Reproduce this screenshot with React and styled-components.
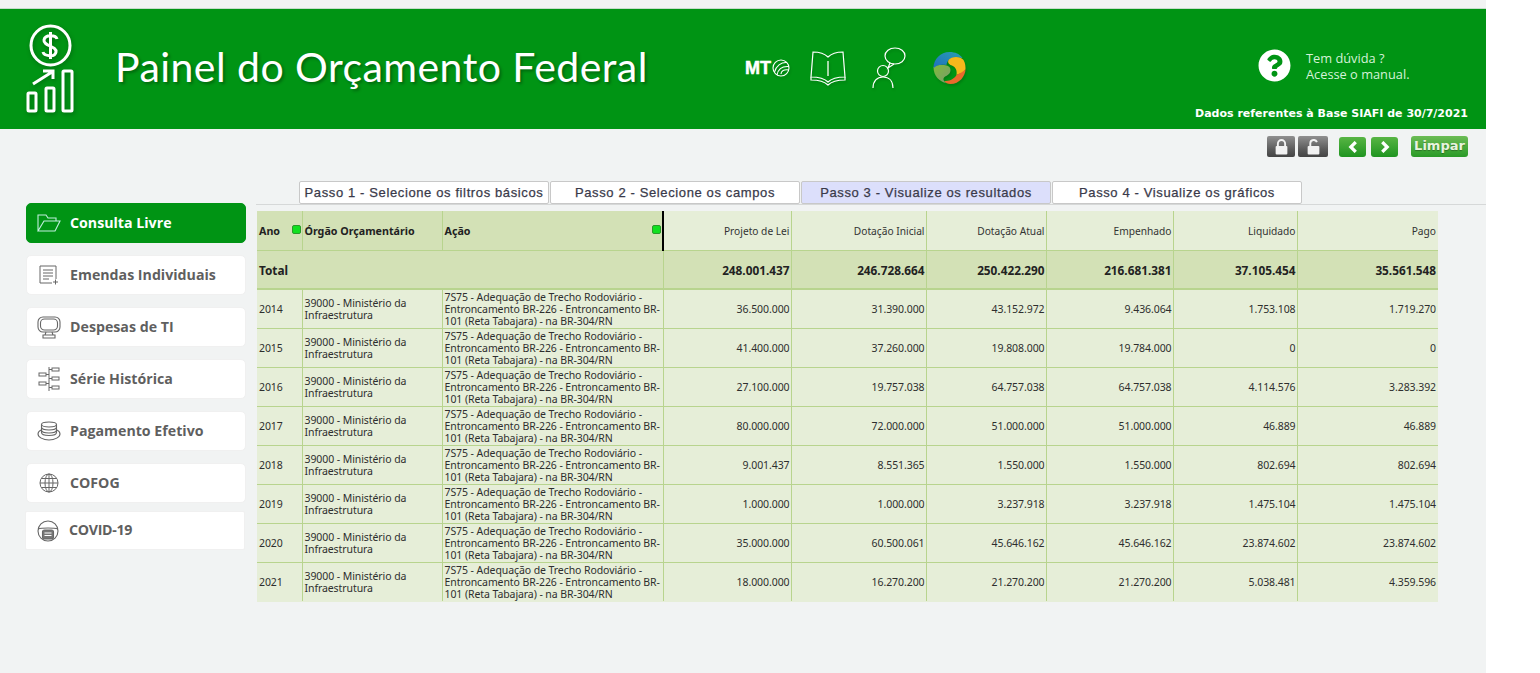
import React from "react";
import styled, { createGlobalStyle } from "styled-components";
import { FaQuestionCircle } from "react-icons/fa";

const GlobalStyle = createGlobalStyle`
  html, body {
    margin: 0;
    padding: 0;
    background: #ffffff;
  }
`;

const ACAO =
  "7S75 - Adequação de Trecho Rodoviário - Entroncamento BR-226 - Entroncamento BR-101 (Reta Tabajara) - na BR-304/RN";
const ORGAO = "39000 - Ministério da Infraestrutura";

const COLS = ["Projeto de Lei", "Dotação Inicial", "Dotação Atual", "Empenhado", "Liquidado", "Pago"];
const TOTAL = ["248.001.437", "246.728.664", "250.422.290", "216.681.381", "37.105.454", "35.561.548"];
const ROWS = [
  ["2014", "36.500.000", "31.390.000", "43.152.972", "9.436.064", "1.753.108", "1.719.270"],
  ["2015", "41.400.000", "37.260.000", "19.808.000", "19.784.000", "0", "0"],
  ["2016", "27.100.000", "19.757.038", "64.757.038", "64.757.038", "4.114.576", "3.283.392"],
  ["2017", "80.000.000", "72.000.000", "51.000.000", "51.000.000", "46.889", "46.889"],
  ["2018", "9.001.437", "8.551.365", "1.550.000", "1.550.000", "802.694", "802.694"],
  ["2019", "1.000.000", "1.000.000", "3.237.918", "3.237.918", "1.475.104", "1.475.104"],
  ["2020", "35.000.000", "60.500.061", "45.646.162", "45.646.162", "23.874.602", "23.874.602"],
  ["2021", "18.000.000", "16.270.200", "21.270.200", "21.270.200", "5.038.481", "4.359.596"],
];
const STEPS = [
  "Passo 1 - Selecione os filtros básicos",
  "Passo 2 - Selecione os campos",
  "Passo 3 - Visualize os resultados",
  "Passo 4 - Visualize os gráficos",
];
const WIDTHS = [45, 140, 221, 128, 135, 120, 127, 124, 141];

const LogoIcon = () => (
  <svg width="54" height="92" viewBox="0 0 54 92" fill="none" stroke="#fff" strokeWidth="3">
    <circle cx="24.500" cy="21.500" r="19.500" />
    <path d="M31 15c-1-4-12-5-13 1s13 6 12 12-12 4-13 0M24.500 8v27" strokeWidth="3" />
    <rect x="2" y="69" width="8" height="18" rx="1" />
    <rect x="20" y="64" width="8" height="23" rx="1" />
    <rect x="37" y="47" width="9" height="40" rx="1" />
    <path d="M7 60l19-12M17 47h10v8" />
  </svg>
);

const BallIcon = () => (
  <svg width="18" height="18" viewBox="0 0 18 18" fill="none" stroke="#fff" strokeWidth="1.1">
    <circle cx="9" cy="9" r="8" />
    <path d="M2.500 13C4 7 9 3 15 3.500M5 16C6 10 10 7 17 7.500M9 15c0-3 3-5 8-4" />
  </svg>
);

const BookIcon = () => (
  <svg width="36" height="35" viewBox="0 0 36 35" fill="none" stroke="#fff" strokeWidth="1.2">
    <path d="M3 1c6 0 11 1 15 5 4-4 9-5 15-5l2 25c-7 0-13 1-17 5-4-4-10-5-17-5z" />
    <path d="M1 26v3c7 0 13 1 17 5 4-4 10-5 17-5v-3" />
    <path d="M18 10v15" stroke="#cfeccf" strokeWidth="1.6" />
  </svg>
);

const PersonIcon = () => (
  <svg width="34" height="42" viewBox="0 0 34 42" fill="none" stroke="#fff" strokeWidth="1.2">
    <ellipse cx="23" cy="9" rx="10" ry="8" />
    <path d="M18 16l-2 5 6-4" />
    <circle cx="11" cy="24" r="5.500" />
    <path d="M1 41c0-7 4-11 10-11s10 4 10 11" />
  </svg>
);

const SwirlIcon = () => (
  <svg width="35" height="34" viewBox="0 0 34 34">
    <defs>
      <linearGradient id="swirlGreen" x1="0" y1="0" x2="1" y2="1">
        <stop offset="0" stopColor="#7fbb3a" />
        <stop offset="1" stopColor="#7a9a70" />
      </linearGradient>
      <linearGradient id="swirlBlue" x1="0" y1="1" x2="1" y2="0">
        <stop offset="0" stopColor="#1f6fc0" />
        <stop offset="1" stopColor="#2a9fb0" />
      </linearGradient>
    </defs>
    <path d="M1 16c0 9 6 15 13 16-3-2-4-4-2-6 3-2 6-3 6-7s-4-5-8-5-7 0-9 2z" fill="url(#swirlGreen)" />
    <path d="M1 17C1 8 8 1 17 1c6 0 10 2 13 6-5-1-11-1-14 2-1 2-2 3-2 5-6-1-10 0-13 3z" fill="url(#swirlBlue)" />
    <path d="M16 9c3-4 12-4 15 0 2 3 2 7 2 9-3 6-6 4-9 6 1-6-2-9-6-10-2-1-3-3-2-5z" fill="#f6b81c" />
    <path d="M12 30c4 0 9-1 12-6 3-2 7-3 9-6 0 7-6 15-15 15-3 0-5-1-6-3z" fill="#ea6a2c" />
  </svg>
);

const LockIcon = ({ open }) => (
  <svg width="15" height="16" viewBox="0 0 14 15" fill="none">
    <path d={open ? "M4 7V4a3.200 3.200 0 0 1 6.200-1" : "M3.600 7V4.400a3.400 3.400 0 0 1 6.800 0V7"} stroke="#f2f2f2" strokeWidth="1.800" />
    <rect x="1.500" y="6.500" width="11" height="8" rx="1" fill="#f2f2f2" />
  </svg>
);

const Chevron = ({ right }) => (
  <svg width="10" height="12" viewBox="0 0 9 11" fill="none" stroke="#fff" strokeWidth="3">
    <path d={right ? "M2 1l4.500 4.500L2 10" : "M7 1L2.500 5.500 7 10"} />
  </svg>
);

const FolderIcon = () => (
  <svg width="26" height="20" viewBox="0 0 26 20" fill="none" stroke="#bfeedd" strokeWidth="1.1">
    <path d="M2 18V2h8l2 3h8v3M2 18h17l5-10H8z" />
  </svg>
);
const DocIcon = () => (
  <svg width="20" height="20" viewBox="0 0 20 20" fill="none" stroke="#666" strokeWidth="1">
    <path d="M13 18H1V1h16v13M4 5h10M4 8h10M4 11h10M4 14h6M14 17h5M16.500 14.500v5" />
  </svg>
);
const MonitorIcon = () => (
  <svg width="24" height="23" viewBox="0 0 24 23" fill="none" stroke="#666" strokeWidth="1.1">
    <rect x="1" y="1" width="22" height="15" rx="5" />
    <rect x="3.500" y="3" width="17" height="11" rx="4" />
    <path d="M9 16l-1 3M15 16l1 3M6 19h12v3H6z" />
  </svg>
);
const TreeIcon = () => (
  <svg width="22" height="24" viewBox="0 0 22 24" fill="none" stroke="#666" strokeWidth="1">
    <rect x="1" y="6" width="7" height="3" />
    <rect x="1" y="15" width="7" height="3" />
    <rect x="14" y="1" width="7" height="3" />
    <rect x="14" y="10" width="7" height="3" />
    <rect x="14" y="19" width="7" height="3" />
    <path d="M11 0v24M8 7.500h3M8 16.500h3M11 2.500h3M11 11.500h3M11 20.500h3" />
  </svg>
);
const CoinsIcon = () => (
  <svg width="24" height="20" viewBox="0 0 24 20" fill="none" stroke="#666" strokeWidth="1.1">
    <ellipse cx="12" cy="3.500" rx="7.500" ry="2.500" />
    <path d="M4.500 3.500v8c0 2 3.500 3 7.500 3s7.500-1 7.500-3v-8M4.500 6c0 2 3.500 3 7.500 3s7.500-1 7.500-3M4.500 9c0 2 3.500 3 7.500 3s7.500-1 7.500-3" />
    <path d="M4 9c-2 1-3 2-3 4 0 3 5 6 11 6s11-3 11-6c0-2-1-3-3-4" />
  </svg>
);
const GlobeIcon = () => (
  <svg width="20" height="20" viewBox="0 0 20 20" fill="none" stroke="#666" strokeWidth="1">
    <circle cx="10" cy="10" r="9" />
    <ellipse cx="10" cy="10" rx="4" ry="9" />
    <path d="M10 1v18M1 10h18M2.500 5.500h15M2.500 14.500h15" />
  </svg>
);
const MaskIcon = () => (
  <svg width="22" height="22" viewBox="0 0 22 22" fill="none" stroke="#666" strokeWidth="1.1">
    <circle cx="11" cy="11" r="10" />
    <path d="M1 9c3-1 6-1 10-1s7 0 10 1" />
    <rect x="5.500" y="10" width="11" height="9" rx="2" fill="#777" />
    <path d="M7.500 13h7M7.500 15.500h7" stroke="#fff" />
  </svg>
);

const MENU = [
  { label: "Consulta Livre", icon: <FolderIcon />, active: true },
  { label: "Emendas Individuais", icon: <DocIcon /> },
  { label: "Despesas de TI", icon: <MonitorIcon /> },
  { label: "Série Histórica", icon: <TreeIcon /> },
  { label: "Pagamento Efetivo", icon: <CoinsIcon /> },
  { label: "COFOG", icon: <GlobeIcon /> },
];

export default function App() {
  return (
    <>
      <GlobalStyle />
      <Page>
        <Header>
          <Logo>
            <LogoIcon />
          </Logo>
          <Title>Painel do Orçamento Federal</Title>
          <HeaderLinks>
            <MtLink>
              MT
              <BallIcon />
            </MtLink>
            <BookIcon />
            <PersonIcon />
            <SwirlIcon />
          </HeaderLinks>
          <HeaderRight>
            <Help>
              <HelpIcon />
              <HelpText>
                Tem dúvida ?
                <br />
                Acesse o manual.
              </HelpText>
            </Help>
            <BaseDate>Dados referentes à Base SIAFI de 30/7/2021</BaseDate>
          </HeaderRight>
        </Header>

        <Toolbar>
          <ToolGroup $gap={3}>
            <LockButton>
              <LockIcon />
            </LockButton>
            <LockButton $wide>
              <LockIcon open />
            </LockButton>
          </ToolGroup>
          <ToolGroup $gap={5}>
            <GreenButton>
              <Chevron />
            </GreenButton>
            <GreenButton>
              <Chevron right />
            </GreenButton>
          </ToolGroup>
          <ClearButton>Limpar</ClearButton>
        </Toolbar>

        <Main>
          <Sidebar>
            {MENU.map((m) => (
              <MenuItem key={m.label} $active={m.active}>
                <MenuIcon>{m.icon}</MenuIcon>
                <MenuLabel>{m.label}</MenuLabel>
              </MenuItem>
            ))}
            <CovidItem>
              <MenuIcon>
                <MaskIcon />
              </MenuIcon>
              <MenuLabel>COVID-19</MenuLabel>
            </CovidItem>
          </Sidebar>

          <Content>
            <Tabs>
              {STEPS.map((s, i) => (
                <Tab key={s} $active={i === 2}>
                  {s}
                </Tab>
              ))}
            </Tabs>
            <Grid>
              <colgroup>
                {WIDTHS.map((w, i) => (
                  <col key={i} style={{ width: w }} />
                ))}
              </colgroup>
              <thead>
                <tr>
                  <HeadCell>
                    <HeadInner>
                      Ano
                      <Dot />
                    </HeadInner>
                  </HeadCell>
                  <HeadCell>Órgão Orçamentário</HeadCell>
                  <HeadCell $split>
                    <HeadInner>
                      Ação
                      <Dot />
                    </HeadInner>
                  </HeadCell>
                  {COLS.map((c) => (
                    <ValueHead key={c}>{c}</ValueHead>
                  ))}
                </tr>
                <tr>
                  <TotalCell colSpan={3}>Total</TotalCell>
                  {TOTAL.map((t, i) => (
                    <TotalCell key={i} $num>
                      {t}
                    </TotalCell>
                  ))}
                </tr>
              </thead>
              <tbody>
                {ROWS.map(([year, ...vals]) => (
                  <tr key={year}>
                    <Cell>{year}</Cell>
                    <Cell>{ORGAO}</Cell>
                    <Cell>{ACAO}</Cell>
                    {vals.map((v, i) => (
                      <Cell key={i} $num>
                        {v}
                      </Cell>
                    ))}
                  </tr>
                ))}
              </tbody>
            </Grid>
          </Content>
        </Main>
      </Page>
    </>
  );
}

const Page = styled.div`
  width: 1486px;
  height: 673px;
  background: #f1f3f3;
  padding-top: 8px;
  box-sizing: border-box;
  overflow: hidden;
`;

// barra verde do topo
const Header = styled.header`
  height: 121px;
  box-sizing: border-box;
  border-top: 1px solid #c5dccb;
  background: #009414;
  display: flex;
  padding-left: 26px;
  padding-right: 18px;
`;
const Logo = styled.div`
  width: 89px;
  padding-top: 15px;
  filter: drop-shadow(1px 2px 2px rgba(0, 0, 0, 0.25));
`;
const Title = styled.h1`
  margin: 0;
  width: 630px;
  font-family: "Lato", sans-serif;
  font-weight: 400;
  font-size: 41px;
  line-height: 116px;
  letter-spacing: 0.45px;
  color: #fff;
  text-shadow: 2px 2px 3px rgba(0, 0, 0, 0.3);
  white-space: nowrap;
`;
const HeaderLinks = styled.div`
  display: flex;
  align-items: center;
  gap: 26px;
  height: 118px;
  flex: 1;
  svg {
    filter: drop-shadow(1px 2px 1px rgba(0, 0, 0, 0.15));
  }
`;
const MtLink = styled.div`
  display: flex;
  align-items: center;
  gap: 1px;
  font-family: "Liberation Sans", Arial, sans-serif;
  font-weight: 700;
  font-size: 18px;
  -webkit-text-stroke: 0.5px #fff;
  color: #fff;
  margin-right: -6px;
`;
const HeaderRight = styled.div`
  display: flex;
  flex-direction: column;
  align-items: flex-end;
`;
const Help = styled.div`
  display: flex;
  align-items: center;
  gap: 15px;
  width: 210px;
  margin-top: 39px;
`;
const HelpIcon = styled(FaQuestionCircle)`
  width: 33px;
  height: 33px;
  color: #fff;
`;
const HelpText = styled.div`
  padding-top: 2px;
  font-family: "Open Sans", sans-serif;
  font-size: 12.8px;
  line-height: 16px;
  color: #d5f2d8;
`;
const BaseDate = styled.div`
  margin-top: 25px;
  font-family: "DejaVu Sans", Verdana, sans-serif;
  font-weight: 700;
  font-size: 11px;
  color: #fff;
  white-space: nowrap;
`;

// botões abaixo do header
const Toolbar = styled.div`
  display: flex;
  justify-content: flex-end;
  align-items: flex-start;
  gap: 11px;
  height: 21px;
  margin-top: 7px;
  padding-right: 18px;
`;
const ToolGroup = styled.div`
  display: flex;
  gap: ${(p) => p.$gap}px;
`;
const LockButton = styled.div`
  width: ${(p) => (p.$wide ? "30px" : "28px")};
  height: 21px;
  border-radius: 2px;
  background: linear-gradient(#909090, #5a5a5a 65%, #444);
  display: flex;
  align-items: center;
  justify-content: center;
`;
const GreenButton = styled.div`
  width: 27px;
  height: 20px;
  margin-top: 1px;
  border-radius: 3px;
  background: linear-gradient(#58b544, #1f9420);
  display: flex;
  align-items: center;
  justify-content: center;
`;
const ClearButton = styled.div`
  width: 57px;
  height: 21px;
  margin-left: 2px;
  border-radius: 3px;
  background: linear-gradient(#6cbc55, #2a9a27);
  color: #e8f3df;
  font-family: "DejaVu Sans", Verdana, sans-serif;
  font-weight: 700;
  font-size: 13px;
  line-height: 20px;
  text-align: center;
  text-shadow: 0 1px 1px rgba(0, 0, 0, 0.3);
`;

const Main = styled.div`
  display: flex;
  padding-left: 26px;
  gap: 10px;
`;
const Sidebar = styled.nav`
  width: 220px;
  padding-top: 46px;
  display: flex;
  flex-direction: column;
  gap: 12px;
`;
const MenuItem = styled.div`
  height: 40px;
  box-sizing: border-box;
  border-radius: 5px;
  display: flex;
  align-items: center;
  background: ${(p) => (p.$active ? "#009414" : "#ffffff")};
  color: ${(p) => (p.$active ? "#ffffff" : "#5f5f5f")};
  border: 1px solid ${(p) => (p.$active ? "#009414" : "#f0f0f0")};
  font-family: "Open Sans", sans-serif;
  font-weight: 700;
  font-size: 14.2px;
`;
const CovidItem = styled(MenuItem)`
  height: 39px;
  margin-top: -4px;
  margin-left: -1px;
  margin-right: 1px;
  border-radius: 2px;
  letter-spacing: -0.3px;
`;
const MenuIcon = styled.span`
  width: 43px;
  display: flex;
  justify-content: center;
  align-items: center;
  box-sizing: border-box;
`;
const MenuLabel = styled.span`
  padding-bottom: 2px;
`;

const Content = styled.div`
  width: 1230px;
`;
const Tabs = styled.div`
  margin-top: 24px;
  height: 24px;
  box-sizing: border-box;
  border-bottom: 1px solid #d6d8d8;
  padding-left: 43px;
  display: flex;
  gap: 1px;
`;
const Tab = styled.div`
  width: 250px;
  height: 23px;
  box-sizing: border-box;
  border: 1px solid #c8c8c8;
  border-radius: 2px;
  background: ${(p) => (p.$active ? "#dcdffb" : "#ffffff")};
  color: #3a3a4a;
  font-family: "Liberation Sans", Arial, sans-serif;
  font-size: 13px;
  letter-spacing: 0.62px;
  -webkit-text-stroke: 0.25px #3a3a4a;
  line-height: 22px;
  text-align: center;
  white-space: nowrap;
`;

// tabela de resultados
const Grid = styled.table`
  margin-top: 6px;
  margin-left: 1px;
  width: 1181px;
  table-layout: fixed;
  border-collapse: collapse;
  font-family: "Noto Sans", Tahoma, sans-serif;
  font-size: 10.5px;
  color: #2e2e2e;
  td:last-child,
  th:last-child {
    border-right: none;
    padding-right: 2px;
  }
`;
const HeadCell = styled.th`
  height: 39px;
  box-sizing: border-box;
  padding: 1px 1px 0 2px;
  text-align: left;
  font-size: 10.7px;
  font-weight: 700;
  white-space: nowrap;
  background: #d3e1b6;
  border-right: ${(p) => (p.$split ? "2px solid #000" : "1px solid #b8d48e")};
  border-bottom: 1px solid #b8d48e;
  color: #222;
`;
const HeadInner = styled.div`
  display: flex;
  align-items: center;
  justify-content: space-between;
`;
const Dot = styled.i`
  width: 7px;
  height: 7px;
  margin-bottom: 3px;
  border: 1px solid #2a9a2a;
  border-radius: 2px;
  background: #10e020;
`;
const ValueHead = styled.th`
  padding: 1px 1px 0 2px;
  text-align: right;
  font-size: 10.2px;
  font-weight: 400;
  background: #e6eed8;
  border-right: 1px solid #b8d48e;
  border-bottom: 1px solid #b8d48e;
  color: #333;
`;
const TotalCell = styled.td`
  height: 39px;
  box-sizing: border-box;
  padding: 1px 1px 0 2px;
  font-size: 11.8px;
  font-weight: 700;
  background: #d3e1b6;
  color: #222;
  text-align: ${(p) => (p.$num ? "right" : "left")};
  border-right: 1px solid #b8d48e;
  border-bottom: 2px solid #b8d48e;
`;
const Cell = styled.td`
  height: 39px;
  box-sizing: border-box;
  padding: 1px 1px 0 2px;
  line-height: 12.2px;
  letter-spacing: -0.08px;
  background: #e6eed8;
  text-align: ${(p) => (p.$num ? "right" : "left")};
  border-right: 1px solid #b8d48e;
  border-bottom: 1px solid #b8d48e;
  tr:last-child & {
    border-bottom-color: #e6eed8;
  }
`;
